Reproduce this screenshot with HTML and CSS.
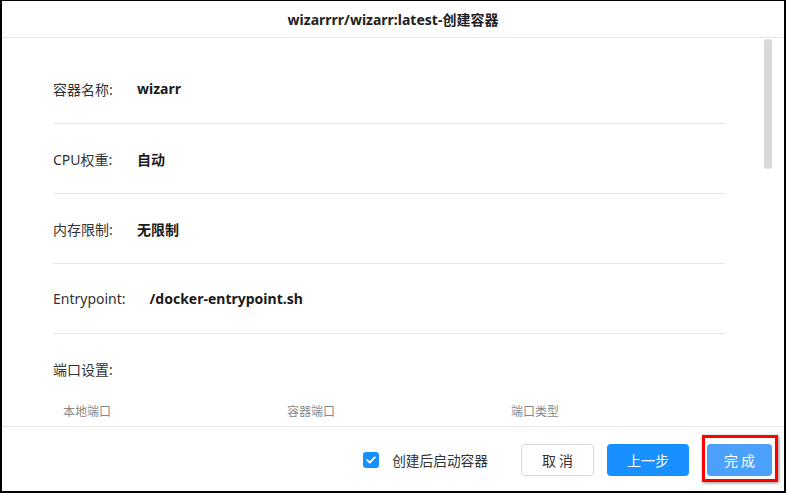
FILE: index.html
```html
<!DOCTYPE html>
<html lang="zh">
<head>
<meta charset="utf-8">
<link rel="stylesheet" href="styles.css">
</head>
<body>
<div class="dialog">
  <div class="header">wizarrrr/wizarr:latest-创建容器</div>
  <div class="body">
    <div class="content">
      <div class="row"><span class="label">容器名称:</span><span class="value">wizarr</span></div>
      <div class="row"><span class="label">CPU权重:</span><span class="value">自动</span></div>
      <div class="row"><span class="label">内存限制:</span><span class="value">无限制</span></div>
      <div class="row"><span class="label">Entrypoint:</span><span class="value">/docker-entrypoint.sh</span></div>
      <div class="section-title">端口设置:</div>
      <div class="table-head">
        <span class="col">本地端口</span>
        <span class="col">容器端口</span>
        <span class="col">端口类型</span>
      </div>
    </div>
    <div class="thumb"></div>
  </div>
  <div class="footer">
    <label class="check">
      <span class="box"><svg width="10" height="8" viewBox="0 0 10 8"><path d="M1.2 4.1 L3.8 6.5 L8.8 1.4" fill="none" stroke="#fff" stroke-width="1.8" stroke-linecap="round" stroke-linejoin="round"/></svg></span>
      <span class="check-text">创建后启动容器</span>
    </label>
    <button class="btn btn-default">取 消</button>
    <button class="btn btn-primary">上一步</button>
    <span class="highlight-wrap">
      <button class="btn btn-finish">完 成</button>
      <span class="mark"></span>
    </span>
  </div>
</div>
</body>
</html>
```
FILE: styles.css
```css
html, body {
  margin: 0;
  padding: 0;
  background: #fff;
}
body {
  font-family: "Noto Sans", "Noto Sans CJK SC", sans-serif;
  color: #333;
}
.dialog {
  width: 786px;
  height: 493px;
  box-sizing: border-box;
  border: 2px solid #000;
  border-top-width: 1px;
  display: flex;
  flex-direction: column;
  overflow: hidden;
}
.header {
  height: 36px;
  flex: none;
  border-bottom: 1px solid #e6e6e6;
  display: flex;
  align-items: center;
  justify-content: center;
  font-size: 14px;
  font-weight: 700;
  color: #222;
}
.body {
  flex: 1;
  position: relative;
  overflow: hidden;
}
.content {
  padding: 16px 0 0 51px;
  width: 672px;
}
.row {
  height: 69px;
  border-bottom: 1px solid #e6e6e6;
  display: flex;
  align-items: center;
  font-size: 14px;
}
.label {
  color: #333;
  margin-right: 24px;
}
.row:nth-child(-n+3) .label {
  width: 60px;
}
.value {
  font-weight: 700;
  color: #1a1a1a;
}
.section-title {
  height: 70px;
  display: flex;
  align-items: center;
  font-size: 14px;
}
.table-head {
  display: flex;
  padding-left: 10px;
  height: 16px;
  align-items: center;
  margin-top: -1px;
  font-size: 12px;
  color: #888;
}
.col {
  flex: none;
  width: 224px;
}
.thumb {
  position: absolute;
  left: 762px;
  top: 1px;
  width: 8px;
  height: 130px;
  border-radius: 4px;
  background: #d8d8d8;
}
.footer {
  height: 65px;
  flex: none;
  border-top: 1px solid #e6e6e6;
  display: flex;
  align-items: center;
  justify-content: flex-end;
  padding-right: 12px;
  padding-top: 2px;
  box-sizing: border-box;
}
.check {
  display: flex;
  align-items: center;
  margin-right: 33px;
}
.box {
  width: 16px;
  height: 16px;
  border-radius: 3px;
  background: #1890ff;
  display: flex;
  align-items: center;
  justify-content: center;
  margin-right: 13px;
}
.check-text {
  font-size: 13.7px;
  color: #333;
}
.btn {
  height: 32px;
  border-radius: 4px;
  font-family: "Noto Sans CJK SC", "Noto Sans", sans-serif;
  font-size: 14px;
  border: 1px solid transparent;
  padding: 0;
}
.btn-default {
  width: 73px;
  background: #fff;
  border-color: #d9d9d9;
  color: #333;
  margin-right: 13px;
}
.btn-primary {
  width: 82px;
  background: #1890ff;
  color: #fff;
  margin-right: 18px;
}
.highlight-wrap {
  position: relative;
  display: flex;
}
.btn-finish {
  width: 65px;
  background: #4ba0fa;
  color: #fff;
}
.mark {
  position: absolute;
  left: -5px;
  top: -9px;
  width: 76px;
  height: 47px;
  box-sizing: border-box;
  border: 3px solid #f00;
  box-shadow: 1px 1px 3px rgba(0,0,0,0.45);
}
```
